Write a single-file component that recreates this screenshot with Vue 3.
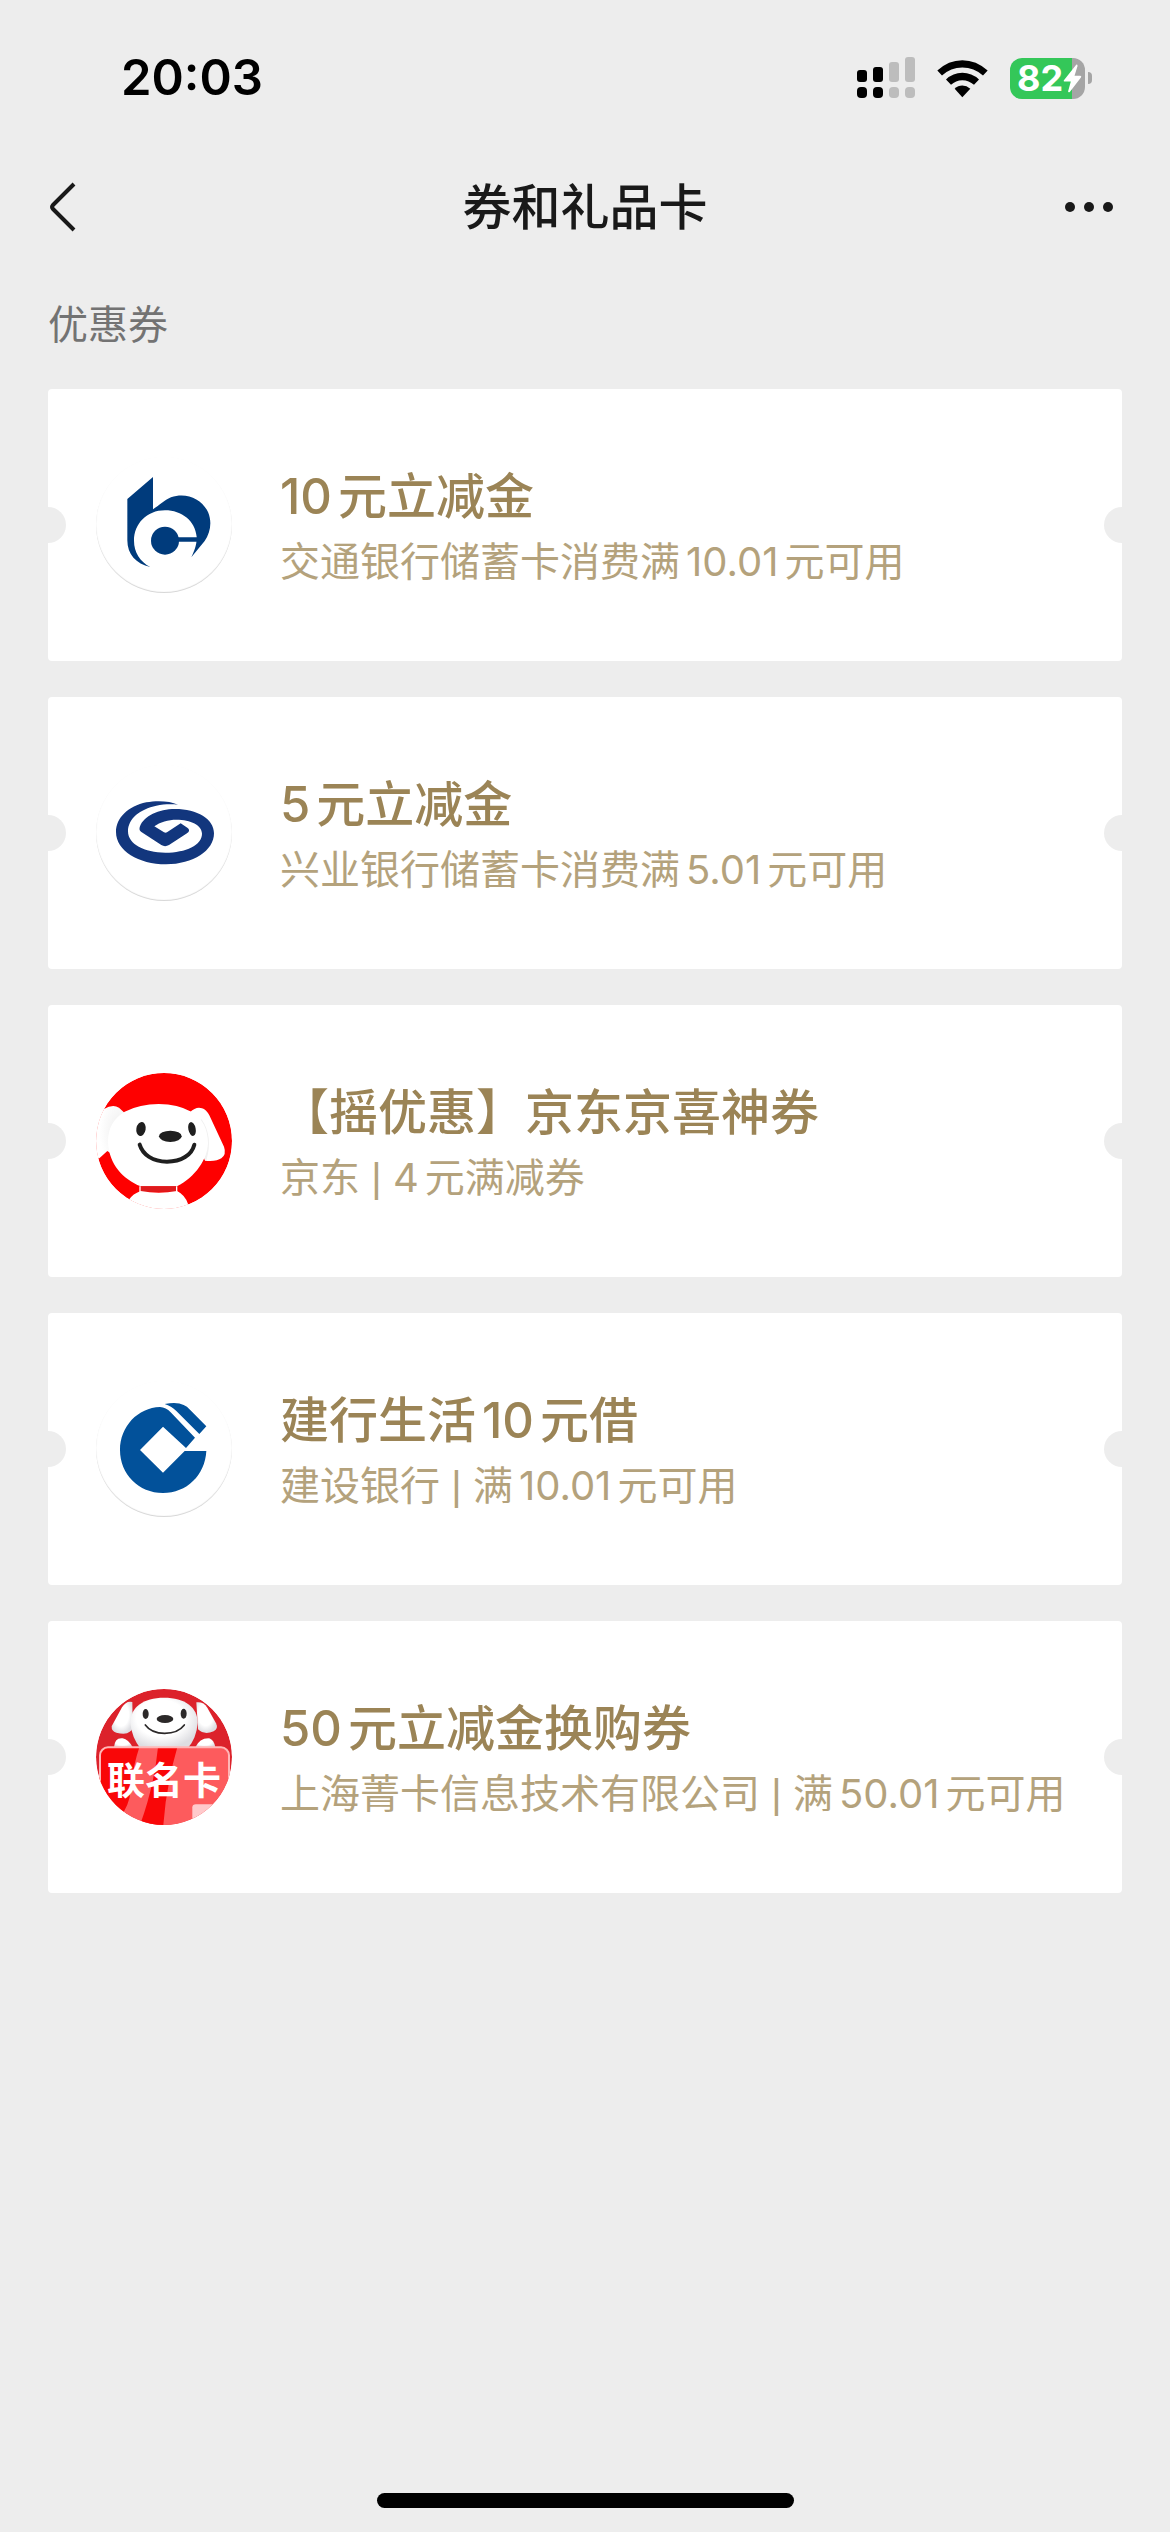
<script setup>
import { ref } from 'vue';

const coupons = ref([
  { logo: 'bocom', title: '10元立减金', desc: '交通银行储蓄卡消费满10.01元可用' },
  { logo: 'cib', title: '5元立减金', desc: '兴业银行储蓄卡消费满5.01元可用' },
  { logo: 'jd', title: '【摇优惠】京东京喜神券', desc: '京东 | 4元满减券' },
  { logo: 'ccb', title: '建行生活10元借', desc: '建设银行 | 满10.01元可用' },
  { logo: 'joint', title: '50元立减金换购券', desc: '上海菁卡信息技术有限公司 | 满50.01元可用' },
]);

// split text so numbers get a little air next to Chinese characters
function split(text) {
  return text.split(/([\d.]+|\|)/).filter(Boolean).map((part, i, all) => ({
    text: part,
    type: part === '|' ? 'bar' : /^\d/.test(part) ? 'num' : 'word',
    spaced: i > 0 && !all[i - 1].endsWith(' '),
  }));
}
</script>

<template>
  <div class="page">
    <div class="status-bar">
      <span class="time">20:03</span>
      <div class="status-icons">
        <svg class="signal" viewBox="0 0 58 42" aria-hidden="true">
          <rect x="0" y="13" width="10" height="12" rx="3" />
          <rect x="16" y="10" width="10" height="15" rx="3" />
          <g fill="#bdbdbd">
            <rect x="32" y="5" width="10" height="20" rx="3" />
            <rect x="48" y="0" width="10" height="25" rx="3" />
            <rect x="32" y="30" width="10" height="11" rx="4" />
            <rect x="48" y="30" width="10" height="11" rx="4" />
          </g>
          <rect x="0" y="30" width="10" height="11" rx="4" />
          <rect x="16" y="30" width="10" height="11" rx="4" />
        </svg>
        <svg class="wifi" viewBox="318 54 153 116" aria-hidden="true">
          <path d="M319 88Q352 57 394 57T470 88L456 103Q429 79 394 79T333 103Z" />
          <path d="M345 115Q366 95 394 95T444 115L429 131Q414 117 394 117T360 131Z" />
          <path d="M371 143Q381 133 394 133T418 143L394 168Z" />
        </svg>
        <div class="battery">
          <span class="battery-body">
            <span class="battery-level">82</span>
            <svg class="bolt" viewBox="690 72 56 86" aria-hidden="true">
              <path d="M729 74L692 121Q691 124 694 124L713 124L705 153Q705 158 710 155L743 112Q746 107 741 107L724 107L733 78Q733 73 729 74Z" fill="#fff" />
            </svg>
          </span>
          <span class="battery-tip"></span>
        </div>
      </div>
    </div>

    <header class="nav">
      <button class="nav-btn back" type="button" aria-label="返回">
        <svg viewBox="0 0 30 50" aria-hidden="true">
          <path d="M26 2L5 23Q3 25 5 27L26 48" fill="none" stroke="#191919" stroke-width="4" />
        </svg>
      </button>
      <h1>券和礼品卡</h1>
      <button class="nav-btn more" type="button" aria-label="更多">
        <i></i><i></i><i></i>
      </button>
    </header>

    <main>
      <h2>优惠券</h2>
      <ul class="list">
        <li v-for="item in coupons" :key="item.title">
          <a href="#" class="card">
            <svg v-if="item.logo === 'bocom'" class="logo ringed" viewBox="48 51 408 408" aria-hidden="true">
              <g fill="#003b7c">
                <path d="M142 177L219 111V208C240 195 252 181 273 172C318 155 366 177 384 216C397 246 391 279 374 303L334 352C342 334 351 315 350 290C345 243 306 211 255 211C200 211 162 252 162 302C162 336 180 365 211 381C168 372 142 343 142 301Z" />
                <circle cx="255" cy="302" r="42" />
                <path d="M290 292H351V305H290Z" />
              </g>
            </svg>
            <svg v-else-if="item.logo === 'cib'" class="logo ringed" viewBox="48 45 408 408" aria-hidden="true">
              <path fill="#12367d" d="M294 164C269 152 229 151 199 157C145 169 108 203 108 246C108 302 176 343 258 343C340 343 402 302 402 250C402 207 352 177 285 177C236 177 192 198 180 229C178 235 177 241 183 245L244 285Q255 292 267 285L321 250Q333 241 322 233L302 220L261 247Q257 249 252 247L223 229C239 216 266 209 289 209C332 209 366 225 366 251C366 285 318 308 256 308C193 308 144 283 144 244C144 206 180 177 229 167C252 162 275 162 294 164Z" />
            </svg>
            <svg v-else-if="item.logo === 'jd'" class="logo" viewBox="48 54 408 408" aria-hidden="true">
              <defs>
                <radialGradient id="ear" cx="0.9" cy="0.5" r="0.7">
                  <stop offset="0" stop-color="#ececec" />
                  <stop offset="1" stop-color="#fff" />
                </radialGradient>
              </defs>
              <circle cx="252" cy="258" r="204" fill="#fe0000" />
              <path d="M40 168L72 162Q98 147 117 158L134 174L100 300L82 288L58 310L40 306Z" fill="url(#ear)" />
              <path d="M330 172Q348 154 366 160Q378 163 388 181L432 275Q440 298 424 310Q410 320 375 317Z" fill="#fff" />
              <path d="M362 195Q396 245 376 314" fill="none" stroke="#f1f1f1" stroke-width="7" />
              <path d="M134 170Q180 147 236 147Q294 148 334 170C368 188 384 225 384 265C382 314 346 366 291 394H182C130 372 87 330 84 261C84 220 100 190 134 170Z" fill="#fff" />
              <path d="M182 394H291V410H182Z" fill="#de1b1d" />
              <path d="M148 433Q158 417 182 408Q236 419 291 408Q316 420 325 449L320 470H140Z" fill="#fff" />
              <path d="M180 394V411M290 394V411" stroke="#fff" stroke-width="4" />
              <g fill="#1f1f1f">
                <ellipse cx="183" cy="222" rx="14" ry="21" transform="rotate(10 183 222)" />
                <ellipse cx="336" cy="222" rx="11" ry="21" transform="rotate(-12 336 222)" />
                <ellipse cx="271" cy="244" rx="34" ry="17" />
              </g>
              <path d="M179 269C188 299 218 320 261 320S335 300 343 269" fill="none" stroke="#1f1f1f" stroke-width="12" stroke-linecap="round" />
            </svg>
            <svg v-else-if="item.logo === 'ccb'" class="logo ringed" viewBox="48 48 408 408" aria-hidden="true">
              <g fill="#02519a">
                <path d="M345 218L318 249L249 185L180 255L249 323L314 258H379C375 331 320 384 249 384C176 384 120 328 120 255C120 184 174 128 240 126Q258 127 272 142Z" />
                <path d="M254 117Q292 110 311 120Q321 124 330 134L379 184L358 207L289 138Q274 123 254 117Z" />
              </g>
            </svg>
            <svg v-else class="logo" viewBox="48 57 408 408" aria-hidden="true">
              <defs>
                <radialGradient id="face" cx="0.45" cy="0.4" r="0.6">
                  <stop offset="0.6" stop-color="#fff" />
                  <stop offset="1" stop-color="#dedee2" />
                </radialGradient>
              </defs>
              <circle cx="252" cy="261" r="204" fill="#dc222b" />
              <g fill="url(#face)">
                <path d="M157 96Q139 91 126 112L95 169Q94 184 109 188Q138 196 149 185Q160 180 158 160Z" />
                <path d="M349 97Q370 94 382 113L408 160Q416 176 401 184Q372 196 354 178Z" />
                <path d="M102 232Q104 202 128 205Q145 208 158 232Z" />
                <path d="M346 232Q360 203 388 205Q402 210 406 232Z" />
                <path d="M252 83C315 83 353 112 353 158Q350 205 322 236H182Q155 202 151 158C151 112 190 83 252 83Z" />
              </g>
              <g fill="#2c2929">
                <ellipse cx="197" cy="132" rx="9" ry="15" />
                <ellipse cx="311" cy="131" rx="9" ry="15" />
                <ellipse cx="255" cy="147" rx="25" ry="12" />
              </g>
              <path d="M196 165Q214 190 254 190T313 165" fill="none" stroke="#2c2929" stroke-width="5" stroke-linecap="round" />
              <rect x="58" y="232" width="390" height="260" rx="24" fill="#fd5b5d" />
              <path d="M82 232H178Q156 300 153 360Q146 412 120 440L58 400V256Q60 232 82 232Z" fill="#f90708" />
              <path d="M234 232H292Q258 350 250 465H180Q222 350 234 232Z" fill="#f90708" />
              <path d="M337 465V412Q337 403 348 403H420L395 465Z" fill="#ffc9cb" />
              <rect x="60" y="232" width="387" height="270" rx="24" fill="none" stroke="#ffb7b7" stroke-width="6" />
              <text x="252" y="373" text-anchor="middle" class="logo-text">联名卡</text>
            </svg>
            <div class="info">
              <h3><span v-for="(part, i) in split(item.title)" :key="i" :class="[part.type, { spaced: part.spaced }]">{{ part.text }}</span></h3>
              <p><span v-for="(part, i) in split(item.desc)" :key="i" :class="[part.type, { spaced: part.spaced }]">{{ part.text }}</span></p>
            </div>
          </a>
        </li>
      </ul>
    </main>

    <div class="home-indicator"></div>
  </div>
</template>

<style>
body {
  margin: 0;
  background: #ededed;
}
</style>

<style scoped>
.page {
  display: flex;
  flex-direction: column;
  box-sizing: border-box;
  min-height: 100vh;
  padding-bottom: 24px;
  background: #ededed;
  color: #191919;
  font-family: Inter, 'Noto Sans CJK SC', sans-serif;
}
h1,
h2,
h3,
p,
ul {
  margin: 0;
  padding: 0;
  font-weight: 400;
}
.status-bar {
  display: flex;
  align-items: center;
  justify-content: space-between;
  height: 108px;
  padding: 24px 78px 9px 121px;
  color: #000;
}
.time {
  font-size: 49px;
  font-weight: 600;
  line-height: 60px;
}
.status-icons {
  display: flex;
  align-items: center;
  gap: 22px;
}
.signal {
  width: 58px;
  height: 42px;
}
.wifi {
  width: 51px;
  height: 39px;
}
.battery {
  display: flex;
  align-items: center;
  gap: 3px;
}
.battery-body {
  display: flex;
  align-items: center;
  box-sizing: border-box;
  width: 75px;
  height: 41px;
  padding-left: 7px;
  border-radius: 12px;
  background: linear-gradient(to right, #34c759 62px, #a5a5a5 62px);
}
.battery-level {
  color: #fff;
  font-size: 36px;
  font-weight: 700;
  line-height: 41px;
}
.bolt {
  flex: none;
  width: 19px;
  height: 29px;
}
.battery-tip {
  width: 4px;
  height: 12px;
  border-radius: 0 6px 6px 0;
  background: #a5a5a5;
}
.nav {
  display: flex;
  align-items: center;
  justify-content: space-between;
  height: 132px;
  padding: 0 48px;
}
.nav-btn {
  display: flex;
  align-items: center;
  width: 96px;
  height: 96px;
  padding: 0;
  border: 0;
  background: none;
}
.back svg {
  width: 30px;
  height: 50px;
}
.more {
  justify-content: flex-end;
  gap: 9px;
  padding-right: 9px;
}
.more i {
  width: 10px;
  height: 10px;
  border-radius: 50%;
  background: #191919;
}
h1 {
  padding-top: 2px;
  font-size: 49px;
  font-weight: 500;
  line-height: 70px;
}
main {
  padding: 22px 48px 48px;
}
h2 {
  color: #737373;
  font-size: 40px;
  line-height: 60px;
}
.list {
  display: flex;
  flex-direction: column;
  gap: 36px;
  margin-top: 34px;
  list-style: none;
}
.card {
  position: relative;
  display: flex;
  align-items: center;
  gap: 48px;
  box-sizing: border-box;
  min-height: 272px;
  padding: 24px 48px;
  overflow: hidden;
  border-radius: 4px;
  background: #fff;
  text-decoration: none;
}
.card::before,
.card::after {
  position: absolute;
  top: 50%;
  width: 36px;
  height: 36px;
  margin-top: -18px;
  border-radius: 50%;
  background: #ededed;
  content: '';
}
.card::before {
  left: -18px;
}
.card::after {
  right: -18px;
}
.logo {
  flex: none;
  width: 136px;
  height: 136px;
  border-radius: 50%;
}
.ringed {
  box-shadow: inset 0 -1px 1px #d4d4d4;
}
.logo-text {
  fill: #fff;
  font-size: 114px;
  font-weight: 700;
}
.info {
  min-width: 0;
  padding-top: 3px;
  white-space: pre;
}
h3 {
  color: #9b8456;
  font-size: 49px;
  font-weight: 500;
  line-height: 70px;
}
p {
  color: #b4a27c;
  font-size: 40px;
  line-height: 60px;
}
.num {
  margin-right: 6px;
}
.num.spaced {
  margin-left: 6px;
}
.bar {
  font-family: 'Liberation Sans', sans-serif;
}
.home-indicator {
  align-self: center;
  width: 417px;
  max-width: 36%;
  height: 15px;
  margin-top: auto;
  border-radius: 8px;
  background: #000;
}
</style>
